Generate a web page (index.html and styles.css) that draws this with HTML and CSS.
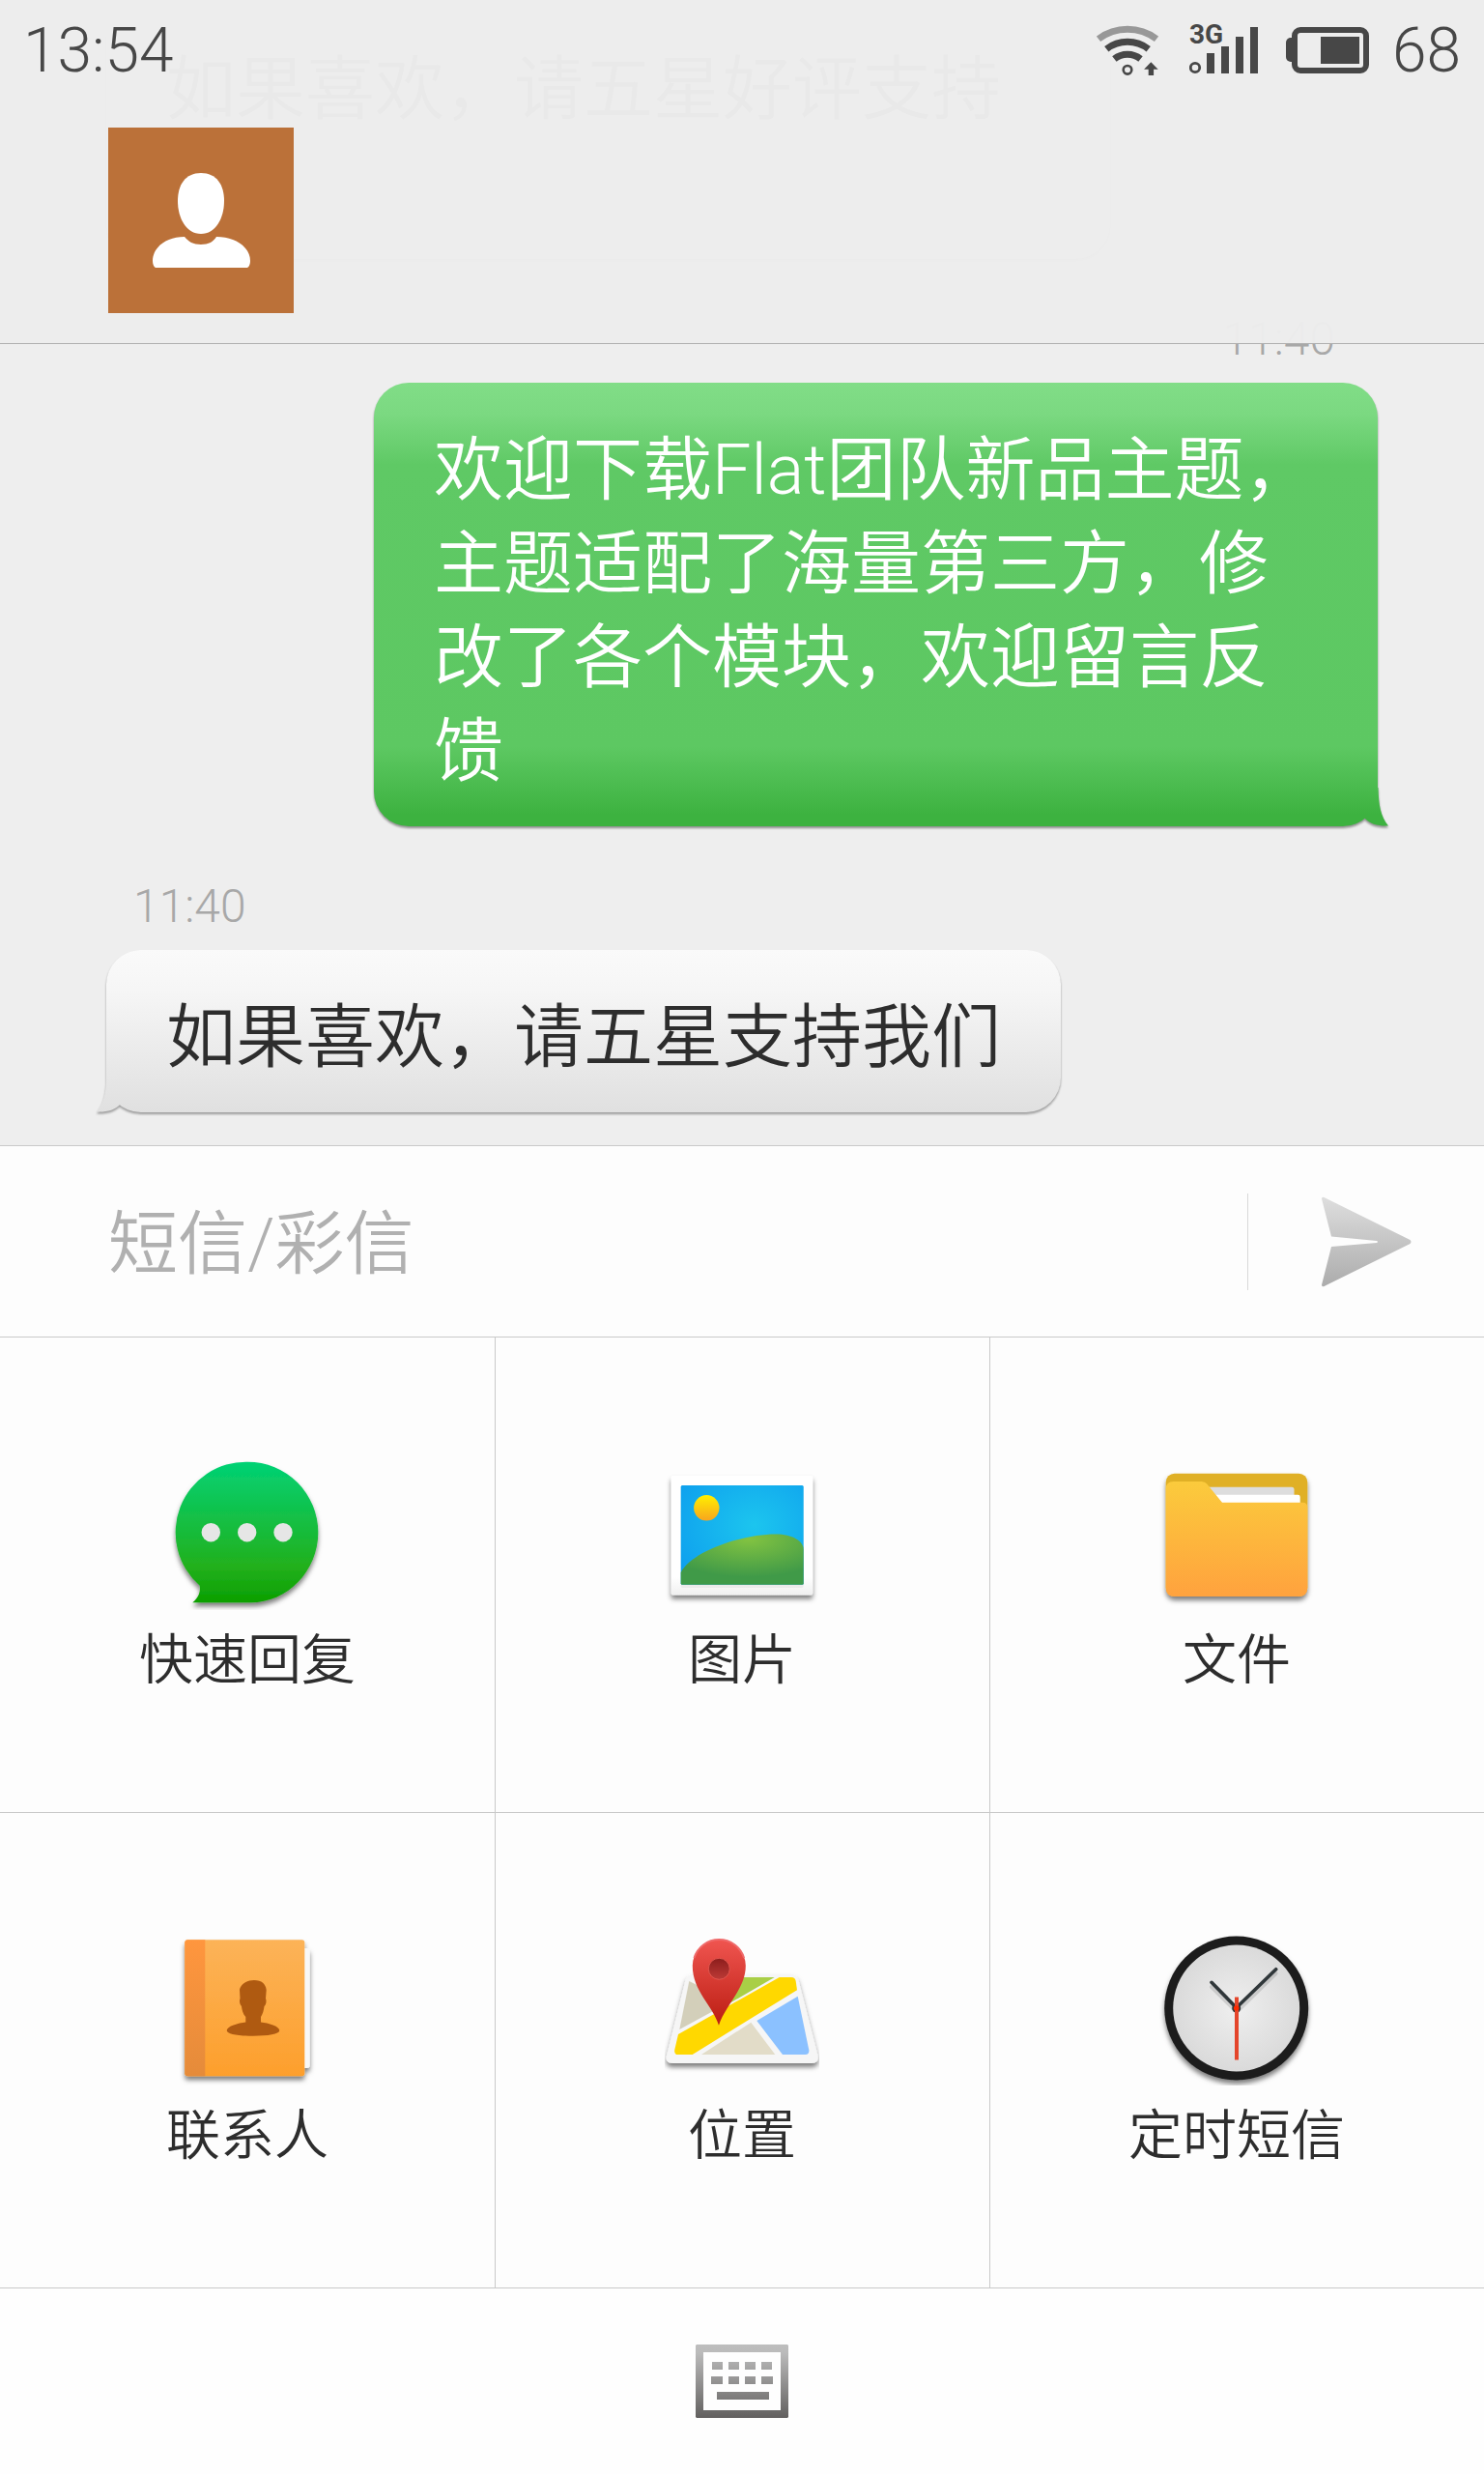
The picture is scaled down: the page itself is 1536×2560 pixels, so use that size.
FILE: index.html
```html
<!DOCTYPE html>
<html lang="zh-CN">
<head>
<meta charset="utf-8">
<meta name="viewport" content="width=device-width, initial-scale=1">
<title>短信</title>
<link rel="stylesheet" href="styles.css">
</head>
<body>
<div class="screen">
  <header class="header">
    <div class="status">
      <span class="status-text">13:54</span>
      <div class="status-icons">
        <svg class="wifi" width="64" height="60" viewBox="0 0 64 60" fill="none" stroke="#474747" stroke-width="7" aria-hidden="true">
          <path d="M2 18.3A50 50 0 0 1 62 18.3" stroke="#989898"/>
          <path d="M10.3 28.7A35.5 35.5 0 0 1 53.7 28.7"/>
          <path d="M18.4 39A21.7 21.7 0 0 1 45.5 39"/>
          <circle cx="32" cy="50.3" r="4.3" stroke-width="2.6"/>
          <path d="M56.3 42.3l7.4 7.5h-4.6V56h-5.4v-6.2h-4.6z" fill="#474747" stroke="none"/>
        </svg>
        <svg class="signal" width="72" height="60" viewBox="0 0 72 60" fill="#474747" aria-hidden="true">
          <text class="network" x="0" y="23">3G</text>
          <circle cx="6" cy="48" r="4.7" fill="none" stroke="#474747" stroke-width="2.8"/>
          <path d="M18 33h8v21h-8zM33 26h8v28h-8zM48 16h8v38h-8zM63 6h8v48h-8z"/>
        </svg>
        <svg class="battery" width="86" height="60" viewBox="0 0 86 60" fill="#474747" aria-hidden="true">
          <rect x="9" y="9" width="74" height="42" rx="6" fill="none" stroke="#474747" stroke-width="6"/>
          <path d="M7 17H5a5 5 0 0 0-5 5v15a5 5 0 0 0 5 5h2z"/>
          <rect x="36" y="16" width="40" height="28"/>
        </svg>
        <span class="status-text">68</span>
      </div>
    </div>
    <a class="avatar" href="#contact" aria-label="联系人资料">
      <svg width="192" height="192" viewBox="0 0 192 192" fill="#fff" aria-hidden="true">
        <path d="M96 47c16 0 24 12 24 29 0 18-9 34-24 34S72 94 72 76c0-17 8-29 24-29z"/>
        <path d="M79 113c4 5 9 8 17 8s13-3 16-8c20 0 35 11 35 25 0 3-1 6-3 7H49c-2-1-3-4-3-7 0-14 14-25 33-25z"/>
      </svg>
    </a>
  </header>

  <main class="thread">
    <div class="message received earlier">
      <p class="bubble">如果喜欢，请五星好评支持</p>
    </div>
    <div class="message sent">
      <time class="time">11:40</time>
      <div class="bubble">
        <p class="text">欢迎下载Flat团队新品主题，主题适配了海量第三方，修改了各个模块，欢迎留言反馈</p>
        <svg class="tail" width="26" height="40" viewBox="0 0 26 40" aria-hidden="true"><path d="M4 0h10.500C15 18 17 30 25 39.500C15 40 6 38 0 31L4 22z" fill="url(#sentTail)"/></svg>
      </div>
    </div>
    <div class="message received">
      <time class="time">11:40</time>
      <div class="bubble">
        <p class="text">如果喜欢，请五星支持我们</p>
        <svg class="tail" width="26" height="40" viewBox="0 0 26 40" aria-hidden="true"><path d="M22 0H11.500C11 18 9 30 1 39.500C11 40 20 38 26 31L22 22z" fill="url(#receivedTail)"/></svg>
      </div>
    </div>
  </main>

  <form class="compose">
    <input class="compose-input" type="text" placeholder="短信/彩信" aria-label="短信/彩信">
    <button class="send" type="button" aria-label="发送">
      <svg width="94" height="94" viewBox="0 0 94 94" aria-hidden="true"><path d="M1 2.500Q1 0 3.500 1L92.500 45q2 2 0 4L3.500 93Q1 94 1 91.500L11 52l47-4q2-1 0-2L11 41.500z" fill="url(#sendFill)"/></svg>
    </button>
  </form>

  <nav class="actions" aria-label="附件">
    <button class="action" type="button">
      <svg class="icon" viewBox="0 0 160 160" aria-hidden="true">
        <g filter="url(#shadow)">
          <path d="M80.300 6.700a73 73 0 0 1 73 73c0 40-32 72.600-70 72.600H23.300c6-5 8.500-11 7.400-17.600A73 73 0 0 1 80.300 6.700z" fill="url(#chatFill)"/>
        </g>
        <g fill="#e6e6e6"><circle cx="42.300" cy="79.700" r="9.700"/><circle cx="79.700" cy="79.700" r="9.700"/><circle cx="117" cy="79.700" r="9.700"/></g>
      </svg>
      <span>快速回复</span>
    </button>
    <button class="action" type="button">
      <svg class="icon" viewBox="0 0 160 160" aria-hidden="true">
        <rect x="6.700" y="21" width="146.500" height="123.500" rx="2" fill="url(#frameFill)" filter="url(#shadow)"/>
        <rect x="16.700" y="31" width="127" height="106" rx="2" fill="#e2e2e2" opacity=".6"/>
        <rect x="16.700" y="31" width="127" height="102.700" rx="1.500" fill="url(#skyFill)"/>
        <path d="M16.700 121C28 99 80 81.500 115 81.500c17 0 28.700 7 28.700 16v34.700q0 1.500-1.500 1.500h-124q-1.500 0-1.500-1.500z" fill="url(#hillFill)"/>
        <circle cx="43.300" cy="54.300" r="13.200" fill="url(#sunFill)"/>
      </svg>
      <span>图片</span>
    </button>
    <button class="action" type="button">
      <svg class="icon" viewBox="0 0 160 160" aria-hidden="true">
        <rect x="6.700" y="18.700" width="146.600" height="127.300" rx="9" fill="#e0b027" filter="url(#shadow)"/>
        <path d="M45 32.700h92q2.500 0 2.500 2.500V50H50z" fill="#ddd"/>
        <path d="M50 40.700h93.500q2.200 0 2.200 2.200V52H55z" fill="#fff"/>
        <path d="M6.700 35q0-8 8-8h29q3.500 0 5.500 2.500L65 48.700h83q5.300 0 5.300 5v83.300q0 9-9 9H15.700q-9 0-9-9z" fill="url(#folderFill)"/>
      </svg>
      <span>文件</span>
    </button>
    <button class="action" type="button">
      <svg class="icon" viewBox="0 0 160 160" aria-hidden="true">
        <g filter="url(#shadow)">
          <rect x="120" y="18" width="24.700" height="124" rx="3" fill="#f8f8f8"/>
          <rect x="15.300" y="9.300" width="124" height="141" rx="3" fill="url(#bookFill)"/>
        </g>
        <path d="M36.300 9.300H18.300q-3 0-3 3v135q0 3 3 3h18z" fill="url(#spineFill)"/>
        <path d="M78.300 89c-3-3-4-8-4.300-11-2-2-2.500-6-1.500-8L72 61c1-6 8-10 15-10 8 0 12 4 12.700 10l-.7 9c1.300 3 0 7-1.500 8-.5 4-1.500 8-3.500 11v5.500c8 1 19 4 19.300 8.500-.3 4-12 5.700-27.300 5.700S59 107 58.700 103c.3-4.500 12-7.500 19.600-8.500z" fill="#af5a11"/>
      </svg>
      <span>联系人</span>
    </button>
    <button class="action" type="button">
      <svg class="icon" viewBox="0 0 160 160" aria-hidden="true">
        <path d="M29 45h102q6 0 7.500 6l20 78q1.500 8-7 8H9q-9 0-7-8l19.500-78q1.500-6 7.500-6z" fill="#f6f6f6" filter="url(#shadow)"/>
        <path d="M25.300 52L42 60.300 52 82 15.300 102z" fill="#d3cfba"/>
        <path d="M60 48h53.700L60 79z" fill="#a9cf46"/>
        <path d="M14 107L118.700 48H131q4 0 4.700 4l1.300 9.300L28.700 128H14q-4.500 0-3.700-5z" fill="#ffd800"/>
        <path d="M89.300 94.700l25 33.300H38z" fill="#e2dcc8"/>
        <path d="M137.700 67.700l11.600 55.500q.7 4.800-4 4.800H122L95.300 93z" fill="#8bc1ff"/>
        <path d="M56 97.700C50 78 28.800 62 28.800 36.300a27.500 27.500 0 0 1 55 0C83.800 60 62 78 56 97.700z" fill="url(#pinFill)"/>
        <path d="M30.500 28a27 27 0 0 1 51.600 0" fill="none" stroke="#ef6a6a" stroke-width="2"/>
        <circle cx="56.300" cy="39.300" r="11" fill="url(#holeFill)" stroke="#e2564e" stroke-width="1"/>
      </svg>
      <span>位置</span>
    </button>
    <button class="action" type="button">
      <svg class="icon" viewBox="0 0 160 160" aria-hidden="true">
        <circle cx="79.700" cy="80" r="74.500" fill="#1d1d1d" filter="url(#shadow)"/>
        <circle cx="79.700" cy="80" r="65.500" fill="url(#faceFill)"/>
        <g stroke-linecap="round" fill="none">
          <path d="M54 58l26 26 40.500-40" stroke="#000" stroke-opacity=".12" stroke-width="4"/>
          <path d="M54 53.300L79.700 79.500l41-39.800" stroke="#30373a" stroke-width="3.600"/>
        </g>
        <circle cx="79.700" cy="80" r="4.500" fill="#30373a"/>
        <path d="M80 68.500v65" stroke="#e4452b" stroke-width="4"/>
        <circle cx="79.700" cy="80" r="2.800" fill="#ff2a00"/>
      </svg>
      <span>定时短信</span>
    </button>
  </nav>

  <footer class="footer">
    <button class="keyboard" type="button" aria-label="键盘">
      <svg width="96" height="76" viewBox="0 0 96 76" aria-hidden="true"><path fill="url(#keyFill)" fill-rule="evenodd" d="M1 0h94l1 1v74l-1 1H1l-1-1V1zM8 8v60h80V8zM17 18h11v8H17zM34 18h11v8H34zM51 18h11v8H51zM68 18h11v8H68zM16 33h12v8H16zM34 33h11v8H34zM51 33h11v8H51zM68 33h12v8H68zM22 49h54v8H22z"/></svg>
    </button>
  </footer>
</div>

<svg class="defs" width="0" height="0" aria-hidden="true">
  <defs>
    <filter id="shadow" x="-10%" y="-10%" width="120%" height="125%"><feDropShadow dx="0" dy="4" stdDeviation="2.500" flood-color="#000" flood-opacity=".5"/></filter>
    <linearGradient id="sentTail" gradientUnits="userSpaceOnUse" x1="0" y1="0" x2="0" y2="28"><stop offset="0" stop-color="#4abb4e"/><stop offset="1" stop-color="#3db240"/></linearGradient>
    <linearGradient id="receivedTail" gradientUnits="userSpaceOnUse" x1="0" y1="0" x2="0" y2="40"><stop offset="0" stop-color="#e7e7e7"/><stop offset="1" stop-color="#e0e0e0"/></linearGradient>
    <linearGradient id="sendFill" x1="0" y1="0" x2="0" y2="1"><stop offset="0" stop-color="#dedede"/><stop offset="1" stop-color="#acacac"/></linearGradient>
    <linearGradient id="chatFill" x1="0" y1="0" x2="0" y2="1"><stop offset="0" stop-color="#02d275"/><stop offset=".75" stop-color="#22b01c"/><stop offset="1" stop-color="#0a9f00"/></linearGradient>
    <linearGradient id="frameFill" x1="0" y1="0" x2="0" y2="1"><stop offset=".85" stop-color="#fff"/><stop offset="1" stop-color="#f0f0f0"/></linearGradient>
    <radialGradient id="skyFill" cx=".6" cy=".4" r=".75"><stop offset="0" stop-color="#1cc5ee"/><stop offset="1" stop-color="#0e9fee"/></radialGradient>
    <radialGradient id="hillFill" cx=".55" cy=".1" r=".75"><stop offset="0" stop-color="#82c341"/><stop offset="1" stop-color="#409a48"/></radialGradient>
    <linearGradient id="sunFill" x1="0" y1="0" x2="0" y2="1"><stop offset="0" stop-color="#fff000"/><stop offset="1" stop-color="#f8a51e"/></linearGradient>
    <linearGradient id="folderFill" x1="0" y1="0" x2="0" y2="1"><stop offset="0" stop-color="#fbcb3c"/><stop offset="1" stop-color="#ffa23e"/></linearGradient>
    <linearGradient id="bookFill" x1="0" y1="0" x2="0" y2="1"><stop offset="0" stop-color="#fcb358"/><stop offset="1" stop-color="#fd9f2c"/></linearGradient>
    <linearGradient id="spineFill" x1="0" y1="0" x2="0" y2="1"><stop offset="0" stop-color="#ff963e"/><stop offset="1" stop-color="#e58b3a"/></linearGradient>
    <linearGradient id="pinFill" x1="0" y1="0" x2="0" y2="1"><stop offset="0" stop-color="#f05550"/><stop offset="1" stop-color="#bb1d12"/></linearGradient>
    <linearGradient id="holeFill" x1="0" y1="0" x2="0" y2="1"><stop offset="0" stop-color="#8b1d1c"/><stop offset="1" stop-color="#bd3a36"/></linearGradient>
    <radialGradient id="faceFill"><stop offset="0" stop-color="#efefef"/><stop offset="1" stop-color="#dadada"/></radialGradient>
    <linearGradient id="keyFill" x1="0" y1="0" x2="0" y2="1"><stop offset="0" stop-color="#bebebe"/><stop offset=".12" stop-color="#bababa"/><stop offset="1" stop-color="#62605f"/></linearGradient>
  </defs>
</svg>
</body>
</html>
```
FILE: styles.css
```css
* {
  box-sizing: border-box;
}

body {
  margin: 0;
  background: #fdfdfd;
  color: #2d2d2d;
  font-family: Roboto, "Noto Sans CJK SC", sans-serif;
  font-weight: 350;
}

button,
input {
  margin: 0;
  padding: 0;
  border: 0;
  background: none;
  color: inherit;
  font: inherit;
}

svg {
  display: block;
}

p {
  margin: 0;
}

.defs {
  position: absolute;
}

.screen {
  position: relative;
  display: flex;
  flex-direction: column;
  min-height: 100vh;
}

.header {
  position: absolute;
  z-index: 1;
  top: 0;
  left: 0;
  right: 0;
  padding-bottom: 31px;
  border-bottom: 1px solid #b0b0b0;
  background: rgba(237, 237, 237, 0.98);
}

.status {
  display: flex;
  align-items: center;
  justify-content: space-between;
  height: 104px;
  padding: 0 24px;
}

.status-text {
  padding-top: 2px;
  color: #474747;
  font-size: 64px;
  font-weight: 300;
  line-height: 72px;
}

.status-icons {
  display: flex;
  align-items: center;
}

.signal {
  margin: 0 28px 0 32px;
}

.battery {
  margin-right: 24px;
}

.network {
  font-size: 28px;
  font-weight: 700;
}

.avatar {
  display: block;
  width: 192px;
  margin: 28px 0 0 112px;
  background: #bb7139;
}

.thread {
  display: flex;
  flex: 1 0 0;
  flex-direction: column;
  justify-content: flex-end;
  overflow: hidden;
  padding: 0 110px 34px;
  background: #eee;
}

.message {
  display: flex;
  flex-direction: column;
}

.sent {
  align-items: flex-end;
  margin-top: 52px;
}

.received {
  align-items: flex-start;
  margin-top: 52px;
}

.time {
  padding: 0 44px 14px 28px;
  color: #a8a8a8;
  font-size: 48px;
  line-height: 62px;
}

.bubble {
  position: relative;
  max-width: 1039px;
  padding: 42px 62px 29px;
  border-radius: 36px;
  font-size: 72px;
  line-height: 97px;
}

.sent .bubble {
  background: linear-gradient(#81dd87, #7bd981 32px, #5fc965 85px, #5dc862 calc(100% - 82px), #3db240 calc(100% - 12px));
  color: #fff;
  filter: drop-shadow(0 2px 1px rgba(0, 0, 0, 0.4));
}

.received .bubble {
  background: linear-gradient(#fafafa, #f6f6f6 24%, #e0e0e0);
  filter: drop-shadow(0 2px 1px rgba(0, 0, 0, 0.35));
}

.earlier .bubble {
  width: 1039px;
  min-height: 266px;
}

.tail {
  position: absolute;
  bottom: 0;
}

.sent .tail {
  right: -12px;
}

.received .tail {
  left: -11px;
}

.compose {
  display: flex;
  align-items: center;
  height: 198px;
  padding-left: 112px;
  border-top: 1px solid #c9c9c9;
}

.compose-input {
  flex: 1;
  min-width: 0;
  height: 120px;
  padding-top: 6px;
  outline: 0;
  font-size: 72px;
}

.compose-input::placeholder {
  color: #b0b0b0;
  opacity: 1;
}

.send {
  height: 100px;
  padding: 0 75px;
  border-left: 1px solid #d8d8d8;
}

.actions {
  display: grid;
  grid-template-columns: repeat(3, 1fr);
  row-gap: 1px;
  border-top: 1px solid #c9c9c9;
  border-bottom: 1px solid #c9c9c9;
  background: #c9c9c9;
}

.action {
  display: flex;
  flex-direction: column;
  align-items: center;
  gap: 12px;
  height: 491px;
  padding-top: 122px;
  background: #fdfdfd;
  font-size: 56px;
  line-height: 80px;
}

.action:not(:nth-child(3n + 1)) {
  padding-right: 1px;
  border-left: 1px solid #c9c9c9;
}

.icon {
  width: 160px;
  height: 160px;
}

.footer {
  display: flex;
  align-items: center;
  justify-content: center;
  height: 192px;
  background: #fefefe;
}
```
